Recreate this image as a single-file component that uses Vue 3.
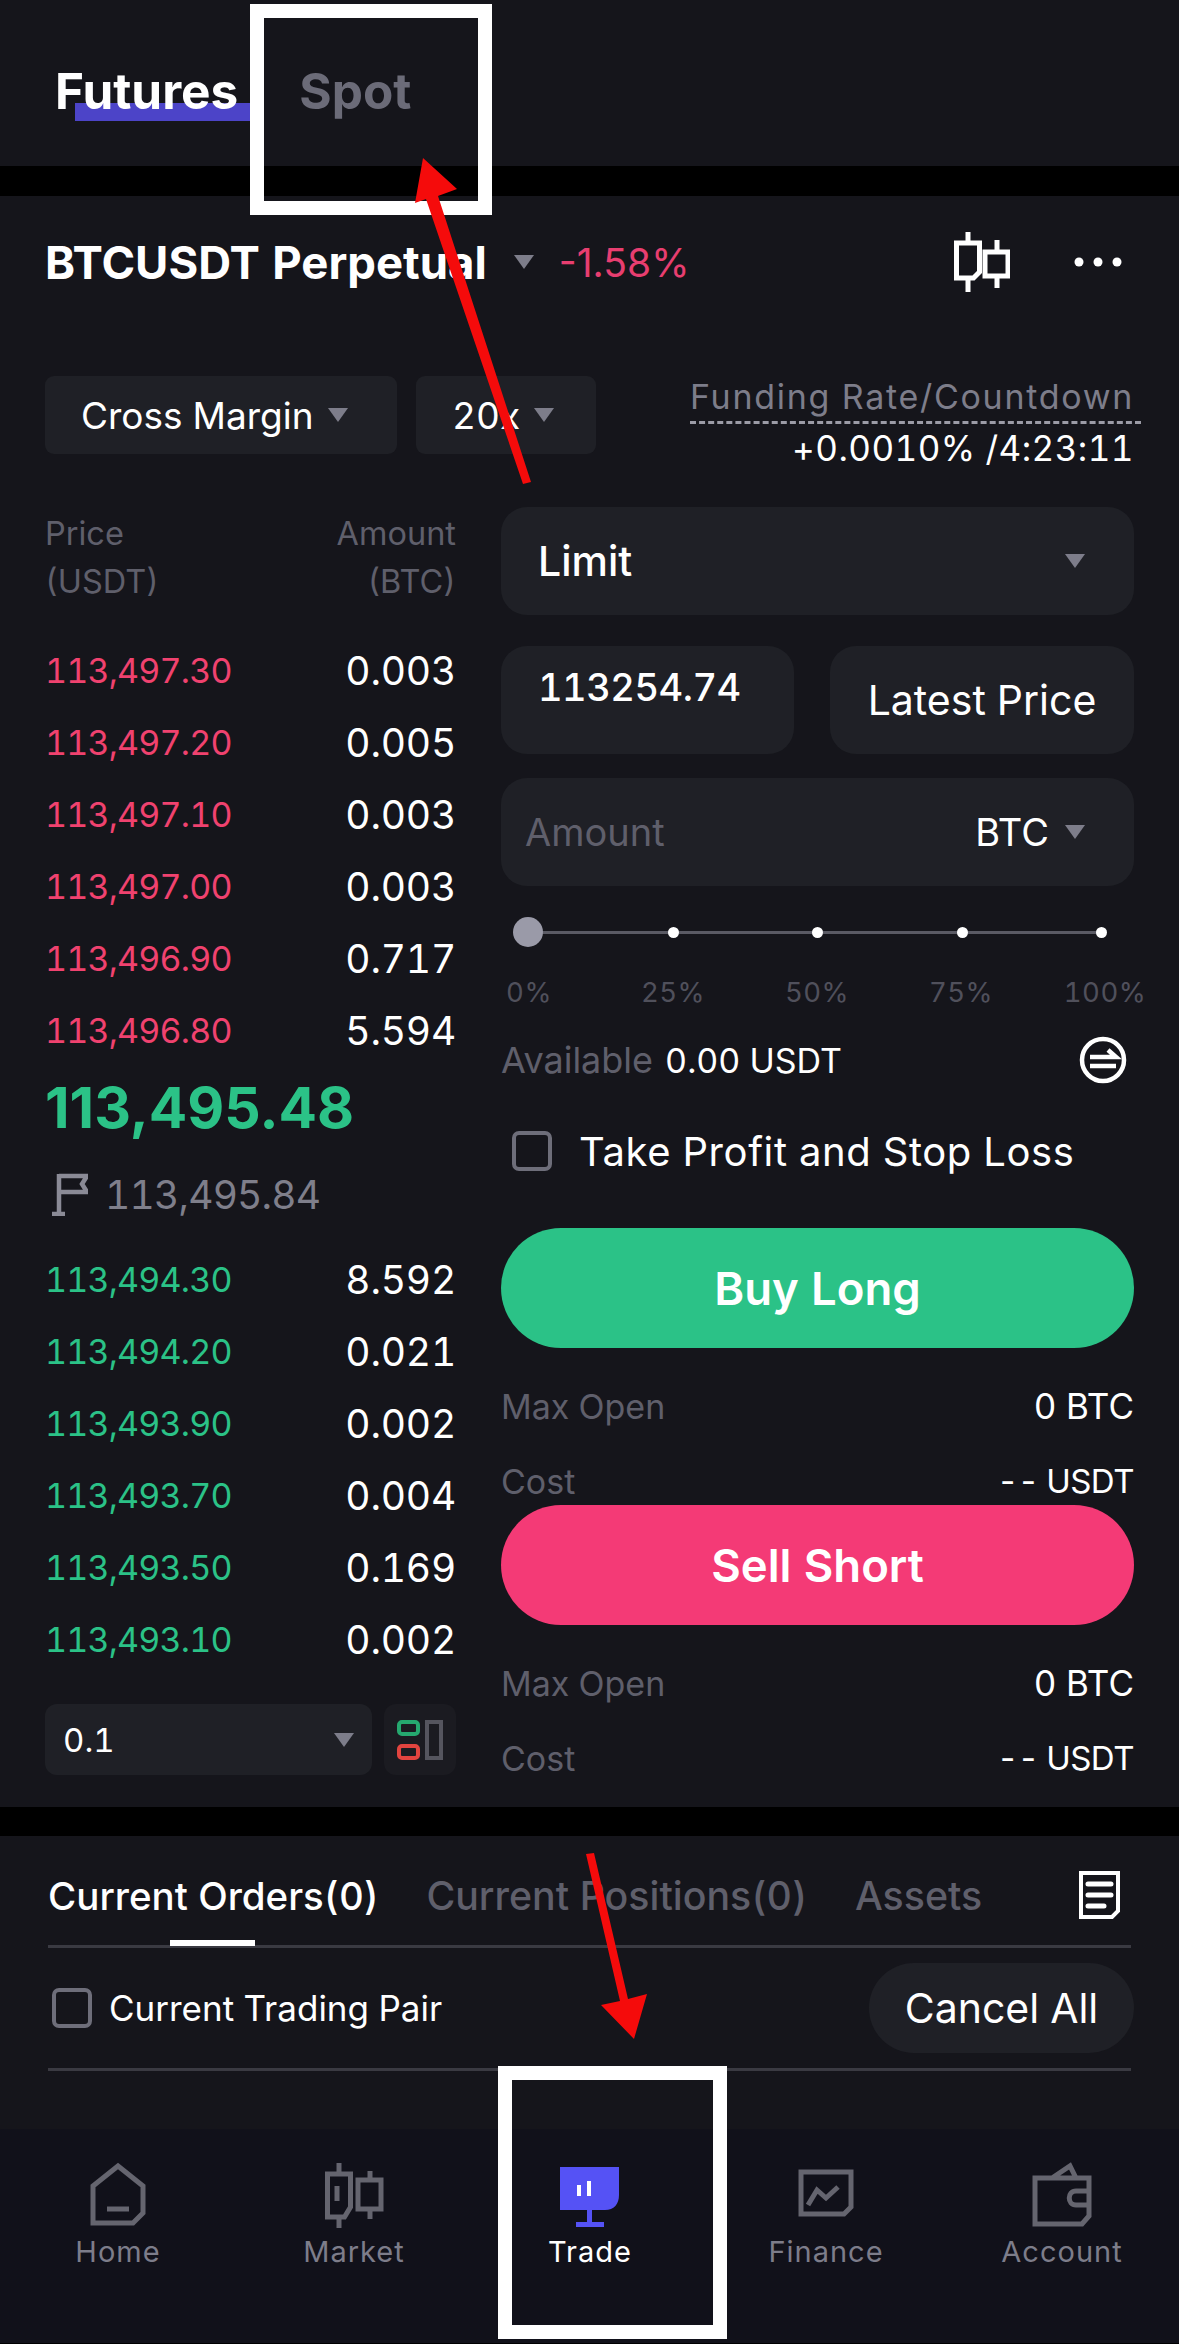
<template>
  <div class="page">
    <header class="top-tabs">
      <div class="top-tab active"><span>Futures</span></div>
      <div class="top-tab"><span>Spot</span></div>
    </header>

    <section class="trade">
      <div class="symbol-row">
        <span class="symbol">BTCUSDT Perpetual</span>
        <i class="caret symbol-caret"></i>
        <span class="change">-1.58%</span>
        <svg class="candle-icon" width="56" height="60" viewBox="0 0 56 60" fill="none" stroke="#fff" stroke-width="5">
          <path d="M14 0v11M14 46v14M2.500 11h23v29l-6 6h-17zM43 8v12M43 44v12M31 20h23v24h-23z" />
        </svg>
        <svg class="more-icon" width="48" height="10" viewBox="0 0 48 10" fill="#fff">
          <circle cx="5" cy="5" r="4.500" /><circle cx="24" cy="5" r="4.500" /><circle cx="43" cy="5" r="4.500" />
        </svg>
      </div>

      <div class="margin-row">
        <div class="chip cross">Cross Margin<i class="caret"></i></div>
        <div class="chip lever">20x<i class="caret"></i></div>
        <div class="funding">
          <div class="funding-label">Funding Rate/Countdown</div>
          <div class="funding-value">+0.0010% /4:23:11</div>
        </div>
      </div>

      <div class="columns">
        <div class="book">
          <div class="book-head">
            <div>Price<br />(USDT)</div>
            <div class="right">Amount<br />(BTC)</div>
          </div>
          <div class="asks">
            <div v-for="row in asks" :key="row[0]" class="book-row">
              <span class="red">{{ row[0] }}</span><span>{{ row[1] }}</span>
            </div>
          </div>
          <div class="last-price">113,495.48</div>
          <div class="mark-price">
            <svg width="36" height="43" viewBox="0 0 36 43" fill="none" stroke="#8a8a96" stroke-width="4.500">
              <path d="M7 1v40M0 41h13M7 3h28l-5 8 5 8H7" />
            </svg>
            <span>113,495.84</span>
          </div>
          <div v-for="row in bids" :key="row[0]" class="book-row">
            <span class="green">{{ row[0] }}</span><span>{{ row[1] }}</span>
          </div>
          <div class="book-foot">
            <div class="step">0.1<i class="caret"></i></div>
            <div class="layout-btn">
              <svg width="46" height="40" viewBox="0 0 46 40" fill="none" stroke-width="4">
                <rect x="2" y="2" width="19" height="12" rx="3" stroke="#25a86f" />
                <rect x="2" y="26" width="19" height="12" rx="3" stroke="#e2443f" />
                <rect x="30" y="2" width="14" height="36" stroke="#55555e" />
              </svg>
            </div>
          </div>
        </div>

        <div class="form">
          <div class="box limit">Limit<i class="caret"></i></div>
          <div class="price-row">
            <div class="box price-input">113254.74</div>
            <div class="box latest">Latest Price</div>
          </div>
          <div class="box amount">
            <span class="placeholder">Amount</span>
            <span class="unit">BTC<i class="caret"></i></span>
          </div>

          <div class="slider">
            <span class="thumb"></span>
            <span v-for="n in 4" :key="n" class="tick"></span>
          </div>
          <div class="percents">
            <span v-for="p in percents" :key="p">{{ p }}</span>
          </div>

          <div class="available">
            <span class="muted">Available</span>
            <span class="avail-value">0.00 USDT</span>
            <svg width="48" height="48" viewBox="0 0 48 48" fill="none" stroke="#fff" stroke-width="4.500">
              <circle cx="24" cy="24" r="21" />
              <path d="M11 21h26l-8-7M11 30h26" />
            </svg>
          </div>

          <div class="tpsl">
            <span class="check big"></span>
            Take Profit and Stop Loss
          </div>

          <div class="action buy">Buy Long</div>
          <div class="stat first"><span class="muted">Max Open</span><span>0 BTC</span></div>
          <div class="stat"><span class="muted">Cost</span><span class="cost">-- USDT</span></div>
          <div class="action sell">Sell Short</div>
          <div class="stat first"><span class="muted">Max Open</span><span>0 BTC</span></div>
          <div class="stat"><span class="muted">Cost</span><span class="cost">-- USDT</span></div>
        </div>
      </div>
    </section>

    <section class="orders">
      <div class="order-tabs">
        <span class="order-tab active">Current Orders(0)</span>
        <span class="order-tab">Current Positions(0)</span>
        <span class="order-tab">Assets</span>
        <svg class="doc-icon" width="41" height="48" viewBox="0 0 41 48" fill="none" stroke="#fff" stroke-width="4">
          <path d="M2 2h37v38l-6 6H2z" />
          <path d="M9 13h23M9 24h23M9 35h16" stroke-width="5" stroke-linecap="round" />
        </svg>
      </div>
      <div class="pair-row">
        <label class="pair"><span class="check"></span>Current Trading Pair</label>
        <div class="cancel">Cancel All</div>
      </div>
    </section>

    <nav class="tabbar">
      <div class="nav-item">
        <svg width="60" height="66" viewBox="0 0 60 66" fill="none" stroke="#65656f" stroke-width="5">
          <path d="M5 61V24L30 4l25 20v27l-10 10zM19 47h22" />
        </svg>
        <span>Home</span>
      </div>
      <div class="nav-item">
        <svg width="60" height="66" viewBox="0 0 60 66" fill="none" stroke="#65656f" stroke-width="5">
          <path d="M15 1v11M15 55v11M3.500 12h23v33l-6 10h-17zM13 24v15M46 9v9M46 47v10M34 18h23v29H34z" />
        </svg>
        <span>Market</span>
      </div>
      <div class="nav-item current">
        <svg width="60" height="66" viewBox="0 0 60 66" fill="#5552f5">
          <path d="M0 5h59v28c0 9-5 15-14 15H0zM27 48h5v12h-5zM16 60h28v5H16z" />
          <path d="M17 23h4v11h-4zM27 19h4v15h-4z" fill="#fff" />
        </svg>
        <span>Trade</span>
      </div>
      <div class="nav-item">
        <svg width="60" height="66" viewBox="0 0 60 66" fill="none" stroke="#65656f" stroke-width="5">
          <path d="M5 10h50v35l-7 7H5z" />
          <path d="M12 43l9-15 9 8 12-11" />
        </svg>
        <span>Finance</span>
      </div>
      <div class="nav-item">
        <svg width="60" height="66" viewBox="0 0 60 66" fill="none" stroke="#65656f" stroke-width="5">
          <path d="M3 16h54v38l-7 8H3zM20 16l18-12 6 12M57 29H44c-9 0-9 14 0 14h13" />
        </svg>
        <span>Account</span>
      </div>
    </nav>

    <!-- tutorial marks drawn over the app -->
    <div class="mark-box spot-box"></div>
    <div class="mark-box trade-box"></div>
    <svg class="arrows" width="1179" height="2344" viewBox="0 0 1179 2344" fill="#f50b0b">
      <path d="M423 158L457 189L438 196L531 482L523 484L426 199L415 203z" />
      <path d="M634 2039L601 2005L620 2001L586 1854L594 1853L628 1999L647 1994z" />
    </svg>
  </div>
</template>

<script setup>
const asks = [
  ['113,497.30', '0.003'],
  ['113,497.20', '0.005'],
  ['113,497.10', '0.003'],
  ['113,497.00', '0.003'],
  ['113,496.90', '0.717'],
  ['113,496.80', '5.594']
]

const bids = [
  ['113,494.30', '8.592'],
  ['113,494.20', '0.021'],
  ['113,493.90', '0.002'],
  ['113,493.70', '0.004'],
  ['113,493.50', '0.169'],
  ['113,493.10', '0.002']
]

const percents = ['0%', '25%', '50%', '75%', '100%']
</script>

<style>
html,
body {
  margin: 0;
  background: #000;
}
</style>

<style scoped>
.page {
  position: relative;
  width: 1179px;
  height: 2344px;
  overflow: hidden;
  background: #000;
  color: #fff;
  font-family: Inter, "Liberation Sans", sans-serif;
  font-variant-numeric: tabular-nums;
}

.top-tabs {
  height: 166px;
  box-sizing: border-box;
  padding: 63px 0 0 55px;
  display: flex;
  gap: 61px;
  background: #15151b;
}

.top-tab {
  position: relative;
  height: 56px;
  line-height: 56px;
  font-size: 49.500px;
  font-weight: 700;
  color: #6b6b78;
}

.top-tab span {
  position: relative;
}

.top-tab.active {
  color: #fff;
}

.top-tab.active::before {
  content: "";
  position: absolute;
  left: 20px;
  top: 40px;
  width: 175px;
  height: 18px;
  background: #4c44c8;
}

.trade {
  margin-top: 30px;
  height: 1611px;
  box-sizing: border-box;
  background: #15151b;
  padding: 0 45px 0 45px;
}

.symbol-row {
  height: 132px;
  display: flex;
  align-items: center;
}

.symbol {
  font-size: 45.500px;
  font-weight: 700;
}

.caret {
  display: inline-block;
  width: 0;
  height: 0;
  border-left: 10px solid transparent;
  border-right: 10px solid transparent;
  border-top: 14px solid #7d7d8a;
}

.symbol-caret {
  margin-left: 27px;
}

.change {
  margin-left: 25px;
  font-size: 39px;
  font-variant-numeric: normal;
  color: #e83e70;
}

.candle-icon {
  margin-left: auto;
}

.more-icon {
  margin: 0 12px 0 64px;
}

.margin-row {
  margin-top: 48px;
  display: flex;
  align-items: flex-start;
}

.chip {
  height: 78px;
  box-sizing: border-box;
  display: flex;
  align-items: center;
  background: #1f2026;
  border-radius: 9px;
  font-size: 37px;
}

.cross {
  width: 352px;
  padding-left: 36px;
  gap: 14px;
}

.lever {
  width: 180px;
  margin-left: 19px;
  padding-left: 36px;
  gap: 14px;
}

.funding {
  margin-left: auto;
  margin-right: -7px;
  text-align: right;
  font-size: 34px;
}

.funding-label {
  color: #7d7d8a;
  height: 48px;
  line-height: 42px;
  padding-right: 7px;
  border-bottom: 3px dashed #9b9ba6;
  box-sizing: border-box;
  letter-spacing: 1.700px;
}

.funding-value {
  padding-right: 7px;
  line-height: 48px;
  font-size: 35px;
  letter-spacing: 0.450px;
}

.columns {
  margin-top: 35px;
  display: grid;
  grid-template-columns: 411px 633px;
  gap: 45px;
}

.book-head {
  display: flex;
  justify-content: space-between;
  padding-top: 3px;
  font-size: 32.500px;
  line-height: 48px;
  color: #5f5f6b;
  margin-bottom: 28px;
}

.right {
  text-align: right;
}

.book-row {
  height: 72px;
  display: flex;
  align-items: center;
  justify-content: space-between;
  font-size: 39px;
  letter-spacing: -0.200px;
}

.book-row .red,
.book-row .green {
  font-size: 34px;
  letter-spacing: -0.800px;
}

.red {
  color: #f0426f;
}

.green {
  color: #2bc287;
}

.last-price {
  height: 80px;
  line-height: 84px;
  font-size: 57px;
  font-weight: 700;
  font-variant-numeric: normal;
  color: #2bc287;
}

.mark-price {
  height: 97px;
  display: flex;
  align-items: center;
  gap: 17px;
  padding-left: 7px;
  font-size: 39px;
  letter-spacing: -0.800px;
  color: #7f7f8b;
}

.book-foot {
  margin-top: 29px;
  display: flex;
  justify-content: space-between;
}

.step {
  width: 327px;
  height: 71px;
  box-sizing: border-box;
  padding: 0 18px;
  display: flex;
  align-items: center;
  justify-content: space-between;
  background: #1f2026;
  border-radius: 12px;
  font-size: 33px;
}

.layout-btn {
  width: 72px;
  height: 71px;
  display: flex;
  align-items: center;
  justify-content: center;
  background: #1b1b21;
  border-radius: 12px;
}

.box {
  height: 108px;
  box-sizing: border-box;
  background: #1f2026;
  border-radius: 26px;
  display: flex;
  align-items: center;
}

.limit {
  justify-content: space-between;
  padding: 0 49px 0 37px;
  font-size: 41px;
  font-weight: 500;
}

.price-row {
  margin-top: 31px;
  display: grid;
  grid-template-columns: 293px 304px;
  gap: 36px;
}

.price-input {
  padding: 0 0 26px 37px;
  font-size: 38px;
  font-weight: 500;
  letter-spacing: -0.500px;
}

.latest {
  justify-content: center;
  font-size: 41px;
}

.amount {
  margin-top: 24px;
  padding: 0 49px 0 24px;
  justify-content: space-between;
  font-size: 38px;
}

.placeholder {
  color: #5f5f6b;
}

.unit {
  display: flex;
  align-items: center;
  gap: 16px;
}

.slider {
  margin-top: 30px;
  height: 32px;
  padding-left: 12px;
  display: flex;
  align-items: center;
  background: linear-gradient(#5a5a64, #5a5a64) 27px center / 573px 3px no-repeat;
}

.thumb {
  width: 30px;
  height: 30px;
  margin-right: 124.500px;
  border-radius: 50%;
  background: #9a9aa8;
}

.tick {
  width: 11px;
  height: 11px;
  border-radius: 50%;
  background: #fff;
}

.tick + .tick {
  margin-left: 133.500px;
}

.tick:last-child {
  margin-left: 128px;
}

.percents {
  margin: 26px -21px 0 -22px;
  height: 36px;
  display: flex;
  justify-content: space-between;
  align-items: center;
  font-size: 27.500px;
  color: #50505b;
  letter-spacing: 0.500px;
}

.percents span {
  width: 100px;
  text-align: center;
}

.available {
  margin-top: 26px;
  height: 48px;
  display: flex;
  align-items: center;
  font-size: 34px;
}

.available .muted {
  font-size: 36px;
}

.available svg {
  margin-left: auto;
  margin-right: 7px;
}

.muted {
  color: #5f5f6b;
}

.avail-value {
  margin-left: 12px;
}

.tpsl {
  margin-top: 45px;
  height: 44px;
  display: flex;
  align-items: center;
  gap: 27px;
  padding-left: 11px;
  font-size: 40px;
  letter-spacing: 0.600px;
}

.check {
  width: 40px;
  height: 40px;
  box-sizing: border-box;
  border: 4px solid #6e6e7a;
  border-radius: 7px;
}

.action {
  height: 120px;
  display: flex;
  align-items: center;
  justify-content: center;
  border-radius: 60px;
  font-size: 45.500px;
  font-weight: 600;
}

.buy {
  margin-top: 55px;
  background: #2bc287;
}

.sell {
  margin-top: -1px;
  background: #f43a76;
}

.stat {
  height: 50px;
  margin-top: 25px;
  display: flex;
  align-items: center;
  justify-content: space-between;
  font-size: 35px;
}

.stat .muted {
  font-size: 34px;
}

.stat.first {
  margin-top: 33px;
}

.stat .cost {
  font-size: 33px;
  letter-spacing: -0.500px;
  word-spacing: -1px;
}

.orders {
  margin-top: 29px;
  height: 293px;
  box-sizing: border-box;
  padding: 0 48px;
  background: #15151b;
}

.order-tabs {
  height: 112px;
  box-sizing: border-box;
  padding-top: 30px;
  display: flex;
  align-items: flex-start;
  gap: 47.500px;
  border-bottom: 3px solid #3a3a42;
  font-size: 39.300px;
  font-weight: 500;
  color: #5f5f6b;
}

.order-tab {
  position: relative;
  line-height: 60px;
}

.order-tab.active {
  font-size: 38.500px;
  color: #fff;
}

.order-tab.active::after {
  content: "";
  position: absolute;
  left: 122px;
  top: 74px;
  width: 85px;
  height: 6px;
  background: #fff;
}

.doc-icon {
  margin-top: 5px;
  margin-left: auto;
  margin-right: 11px;
}

.pair-row {
  height: 123px;
  box-sizing: border-box;
  display: flex;
  align-items: center;
  justify-content: space-between;
  border-bottom: 3px solid #3a3a42;
}

.pair {
  display: flex;
  align-items: center;
  gap: 17px;
  padding-left: 4px;
  font-size: 35px;
}

.cancel {
  width: 265px;
  height: 90px;
  margin-right: -3px;
  display: flex;
  align-items: center;
  justify-content: center;
  background: #1f2026;
  border-radius: 45px;
  font-size: 41px;
}

.tabbar {
  height: 214px;
  box-sizing: border-box;
  padding-top: 33px;
  display: grid;
  grid-template-columns: repeat(5, 236px);
  background: #11111a;
}

.nav-item {
  display: flex;
  flex-direction: column;
  align-items: center;
  font-size: 29px;
  letter-spacing: 1px;
  color: #7d7d8a;
}

.nav-item span {
  margin-top: 2px;
  line-height: 44px;
}

.nav-item.current {
  color: #fff;
}

.mark-box {
  position: absolute;
  box-sizing: border-box;
  border: 14px solid #fff;
}

.spot-box {
  left: 250px;
  top: 4px;
  width: 242px;
  height: 211px;
}

.trade-box {
  left: 498px;
  top: 2066px;
  width: 229px;
  height: 273px;
}

.arrows {
  position: absolute;
  left: 0;
  top: 0;
}
</style>
